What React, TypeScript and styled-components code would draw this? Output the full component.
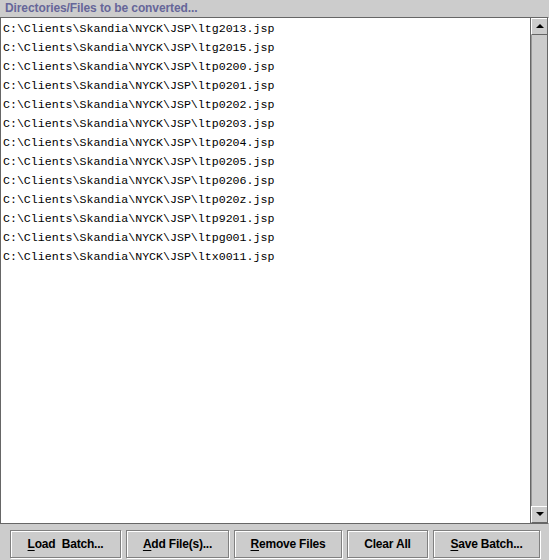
import styled, { createGlobalStyle } from 'styled-components';

const files = [
    'ltg2013.jsp',
    'ltg2015.jsp',
    'ltp0200.jsp',
    'ltp0201.jsp',
    'ltp0202.jsp',
    'ltp0203.jsp',
    'ltp0204.jsp',
    'ltp0205.jsp',
    'ltp0206.jsp',
    'ltp020z.jsp',
    'ltp9201.jsp',
    'ltpg001.jsp',
    'ltx0011.jsp',
];

const buttons = [
    { pre: '', key: 'L', post: 'oad  Batch...', width: 111 },
    { pre: '', key: 'A', post: 'dd File(s)...', width: 103 },
    { pre: '', key: 'R', post: 'emove Files', width: 108 },
    { pre: 'Clear All', key: '', post: '', width: 81 },
    { pre: '', key: 'S', post: 'ave Batch...', width: 107 },
];

export default function App() {
    return (
        <>
            <GlobalStyle />
            <Frame>
                <Title>Directories/Files to be converted...</Title>
                <ScrollPane>
                    <FileList>
                        {files.map((f) => (
                            <FileRow key={f}>C:\Clients\Skandia\NYCK\JSP\{f}</FileRow>
                        ))}
                    </FileList>
                    <ScrollBar>
                        <ArrowButton>
                            <svg width="8" height="5" viewBox="0 0 8 5">
                                <path d="M4 0 L8 4 L0 4 Z" fill="#000" />
                            </svg>
                        </ArrowButton>
                        <Track />
                        <ArrowButton>
                            <svg width="8" height="5" viewBox="0 0 8 5">
                                <path d="M0 0 L8 0 L4 4 Z" fill="#000" />
                            </svg>
                        </ArrowButton>
                    </ScrollBar>
                </ScrollPane>
                <ButtonBar>
                    {buttons.map((b) => (
                        <Button key={b.pre + b.key + b.post} style={{ width: b.width }}>
                            {b.pre}
                            {b.key && <u>{b.key}</u>}
                            {b.post}
                        </Button>
                    ))}
                </ButtonBar>
            </Frame>
        </>
    );
}

const GlobalStyle = createGlobalStyle`
    html, body {
        margin: 0;
        padding: 0;
        background: #cccccc;
    }
`;

const Frame = styled.div`
    width: 549px;
    height: 560px;
    display: flex;
    flex-direction: column;
    background: #cccccc;
    font-family: "Liberation Sans", Arial, sans-serif;
`;

const Title = styled.div`
    height: 17px;
    line-height: 16px;
    padding-left: 5px;
    font-size: 12px;
    font-weight: bold;
    letter-spacing: -0.1px;
    color: #666699;
    white-space: nowrap;
`;

const ScrollPane = styled.div`
    height: 505px;
    display: flex;
    border-top: 1px solid #666666;
    border-left: 1px solid #666666;
    border-bottom: 1px solid #666666;
    border-right: 1px solid #ffffff;
    box-shadow: inset -1px 0 0 #666666;
`;

const FileList = styled.div`
    flex: 1;
    background: #ffffff;
    padding: 1px 0 0 2px;
`;

const FileRow = styled.div`
    height: 19px;
    line-height: 19px;
    font-family: "Liberation Mono", "Courier New", monospace;
    font-size: 11.6px;
    color: #000000;
    white-space: nowrap;
`;

const ScrollBar = styled.div`
    width: 16px;
    display: flex;
    flex-direction: column;
    border-left: 1px solid #666666;
    margin-right: 1px;
`;

const ArrowButton = styled.div`
    height: 15px;
    display: flex;
    align-items: center;
    justify-content: center;
    background: #cccccc;
    border-top: 1px solid #ffffff;
    border-left: 1px solid #ffffff;
    border-bottom: 1px solid #666666;
`;

const Track = styled.div`
    flex: 1;
    background: #cccccc;
    box-shadow: inset 1px 0 0 #999999;
`;

const ButtonBar = styled.div`
    display: flex;
    justify-content: center;
    gap: 5px;
    padding: 6px 0 0 1px;
`;

const Button = styled.div`
    box-sizing: border-box;
    height: 28px;
    display: flex;
    align-items: center;
    justify-content: center;
    background: #cccccc;
    border: 1px solid #808080;
    box-shadow: inset 1px 1px 0 #ffffff, 1px 1px 0 #ffffff;
    font-size: 12px;
    font-weight: bold;
    letter-spacing: -0.2px;
    color: #000000;
    white-space: pre;

    u {
        text-decoration: underline;
        text-underline-offset: 2px;
    }
`;
